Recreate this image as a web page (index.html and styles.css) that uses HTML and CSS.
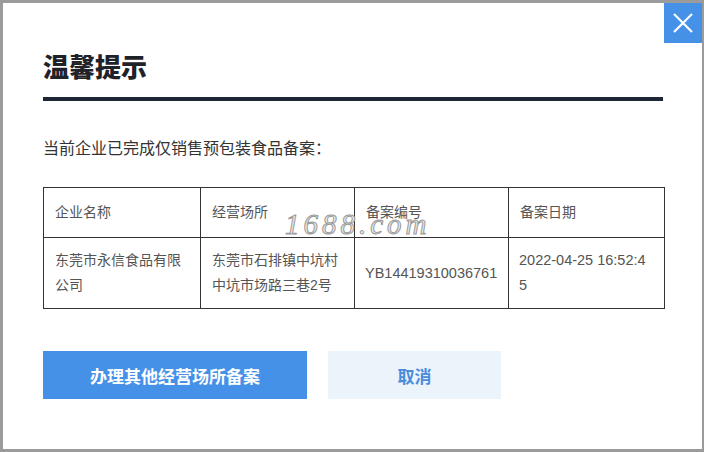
FILE: index.html
```html
<!DOCTYPE html>
<html lang="zh-CN">
<head>
<meta charset="utf-8">
<link rel="stylesheet" href="styles.css">
</head>
<body>
<div class="dialog">
  <button class="close" aria-label="关闭">
    <svg width="22" height="22" viewBox="0 0 22 22"><path d="M2 2 L20 20 M20 2 L2 20" stroke="#fff" stroke-width="2.2" fill="none"/></svg>
  </button>
  <h1 class="title">温馨提示</h1>
  <div class="rule"></div>
  <p class="intro">当前企业已完成仅销售预包装食品备案：</p>
  <div class="table-wrap">
    <table class="records">
      <colgroup>
        <col class="w1"><col class="w2"><col class="w3"><col class="w4">
      </colgroup>
      <tr class="head">
        <td>企业名称</td>
        <td>经营场所</td>
        <td>备案编号</td>
        <td>备案日期</td>
      </tr>
      <tr class="body">
        <td>东莞市永信食品有限公司</td>
        <td>东莞市石排镇中坑村中坑市场路三巷2号</td>
        <td class="num">YB14419310036761</td>
        <td class="num date">2022-04-25 16:52:45</td>
      </tr>
    </table>
    <div class="watermark">1688.com</div>
  </div>
  <div class="actions">
    <button class="btn primary">办理其他经营场所备案</button>
    <button class="btn secondary">取消</button>
  </div>
</div>
</body>
</html>
```
FILE: styles.css
```css
html, body {
  margin: 0;
  padding: 0;
}
body {
  background: #9b9b9b;
  padding: 3px 2px 3px 3px;
  height: 452px;
  box-sizing: border-box;
  font-family: "Liberation Sans", "Noto Sans CJK SC", sans-serif;
}
.dialog {
  position: relative;
  background: #fff;
  height: 446px;
  box-sizing: border-box;
  padding: 47px 39px 0 40px;
}
.close {
  position: absolute;
  top: 0;
  right: 0;
  width: 38px;
  height: 40px;
  border: 0;
  padding: 0;
  background: #4591e8;
  display: flex;
  align-items: center;
  justify-content: center;
}
.title {
  margin: 0;
  font-family: "Noto Sans CJK SC", sans-serif;
  font-size: 26px;
  line-height: 32px;
  font-weight: 900;
  color: #1f2329;
}
.rule {
  margin-top: 15px;
  height: 4px;
  background: #1d2733;
}
.intro {
  margin: 36px 0 0;
  font-family: "Noto Sans CJK SC", sans-serif;
  font-size: 16px;
  line-height: 20px;
  color: #333;
}
.table-wrap {
  position: relative;
  margin-top: 30px;
}
.records {
  width: 621px;
  border-collapse: collapse;
  table-layout: fixed;
  color: #555;
  font-size: 14px;
}
.w1 { width: 157px; }
.w2 { width: 154px; }
.w3 { width: 154px; }
.w4 { width: 156px; }
.records td {
  border: 1.5px solid #333;
  padding: 0 11px;
  vertical-align: middle;
  line-height: 25px;
}
.records .num { font-size: 14.5px; padding-left: 10px; }
.records .date { word-break: break-all; padding-right: 16px; }
.head td { height: 49px; }
.body td { height: 70px; }
.watermark {
  position: absolute;
  left: 242px;
  top: 21px;
  font-family: "Liberation Serif", serif;
  font-style: italic;
  font-size: 29px;
  letter-spacing: 4px;
  color: #ececec;
  -webkit-text-stroke: 1px #9a9a9a;
  pointer-events: none;
}
.actions {
  display: flex;
  gap: 21px;
  margin-top: 42px;
}
.btn {
  height: 48px;
  border: 0;
  font-family: "Noto Sans CJK SC", sans-serif;
  font-size: 17px;
  font-weight: 700;
  padding: 0;
}
.primary {
  width: 264px;
  background: #4591e8;
  color: #fff;
}
.secondary {
  width: 173px;
  background: #ebf3fb;
  color: #4a8ddb;
}
```
